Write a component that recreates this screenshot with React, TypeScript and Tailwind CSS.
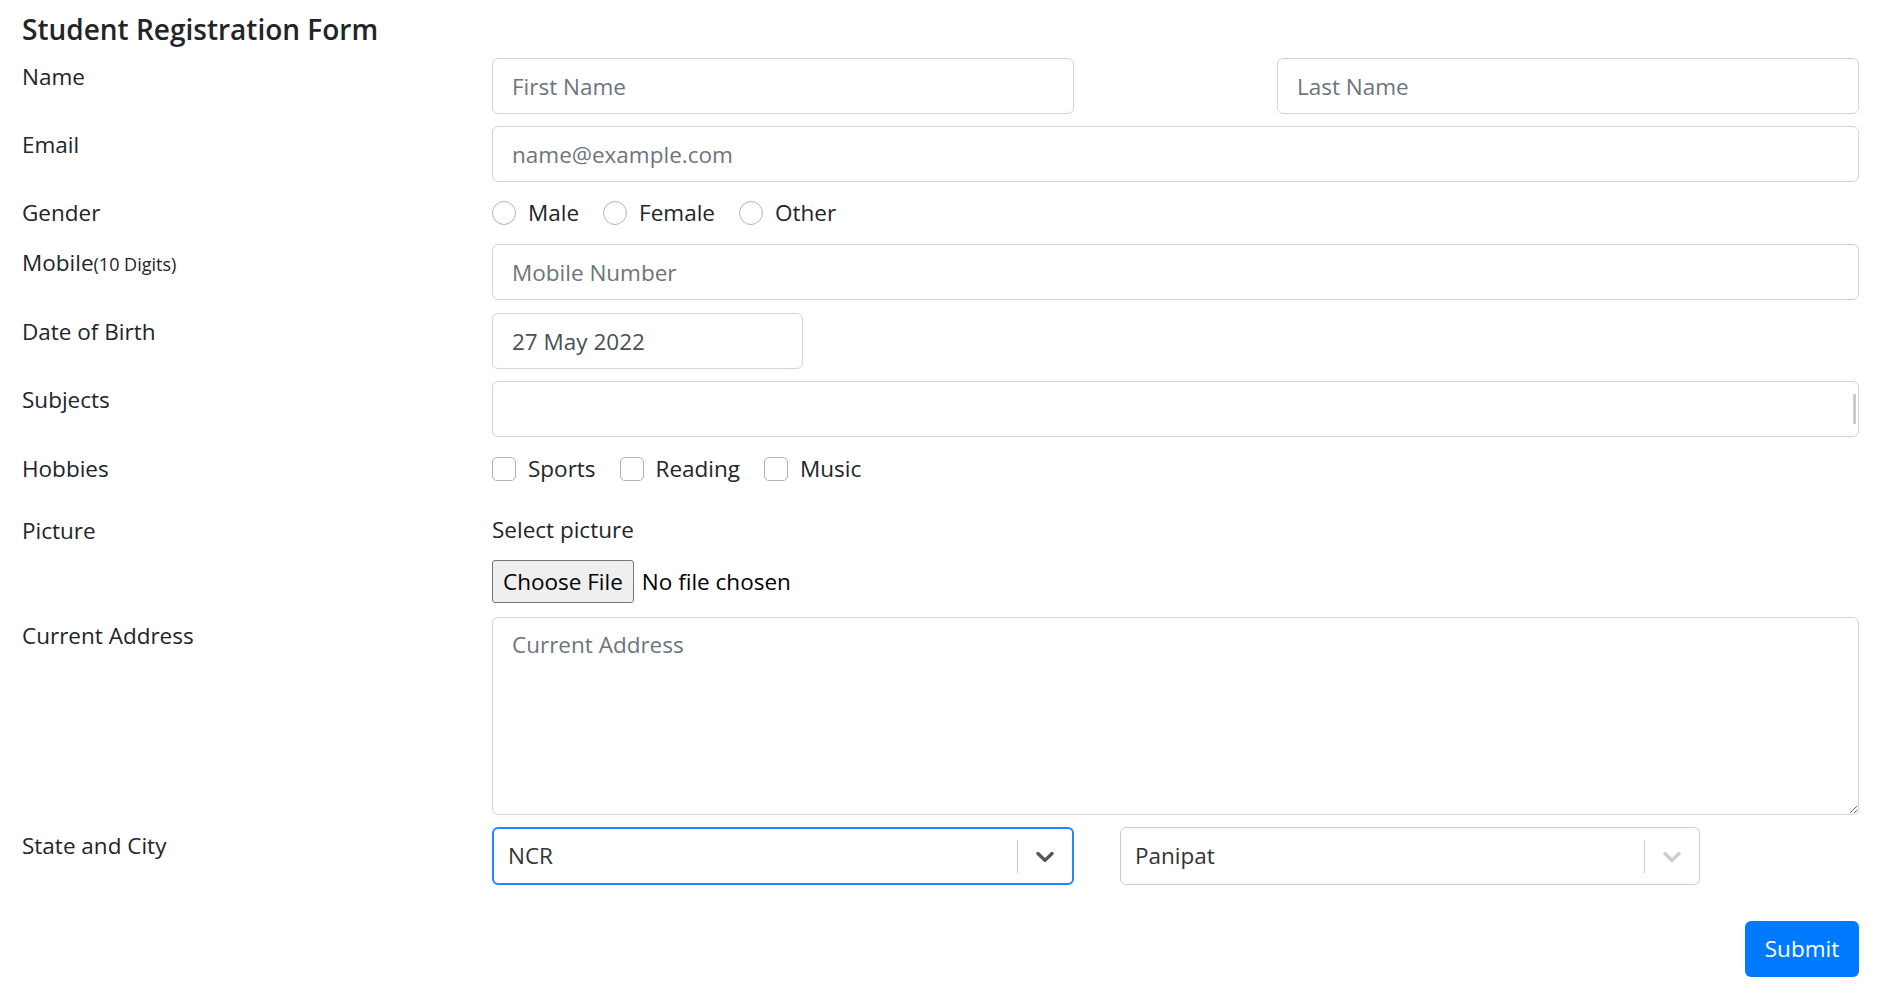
import { ReactNode } from "react";

function Row({ label, children, className = "" }: { label: ReactNode; children: ReactNode; className?: string }) {
  return (
    <div className={`flex ${className}`}>
      <div className="w-[470px] shrink-0 pt-px leading-[36px]">{label}</div>
      <div className="flex-1 min-w-0">{children}</div>
    </div>
  );
}

const inputCls =
  "block h-[56px] w-full rounded-[6px] border border-[#ced4da] bg-white px-[19px] text-[22.5px] text-[#495057] outline-none placeholder:text-[#6c757d]";

function Radio({ label }: { label: string }) {
  return (
    <span className="mr-[24px] inline-flex items-center">
      <span className="mr-[12px] h-[24px] w-[24px] rounded-full border border-[#adb5bd] bg-white" />
      {label}
    </span>
  );
}

function Check({ label }: { label: string }) {
  return (
    <span className="mr-[24px] inline-flex items-center">
      <span className="mr-[12px] h-[24px] w-[24px] rounded-[5px] border border-[#adb5bd] bg-white" />
      {label}
    </span>
  );
}

function Chevron({ color }: { color: string }) {
  return (
    <svg viewBox="0 0 20 20" className="h-[30px] w-[30px]" fill={color}>
      <path d="M4.516 7.548c0.436-0.446 1.043-0.481 1.576 0l3.908 3.747 3.908-3.747c0.533-0.481 1.141-0.446 1.574 0 0.436 0.445 0.408 1.197 0 1.615-0.406 0.418-4.695 4.502-4.695 4.502-0.217 0.223-0.502 0.335-0.787 0.335s-0.57-0.112-0.789-0.335c0 0-4.287-4.084-4.695-4.502s-0.436-1.17 0-1.615z" />
    </svg>
  );
}

function SelectBox({ value, focused, width }: { value: string; focused?: boolean; width: string }) {
  return (
    <div
      className={`flex h-[58px] items-center rounded-[6px] bg-white ${width} ${
        focused ? "border-2 border-[#2684ff]" : "border border-[#cccccc]"
      }`}
    >
      <div className="flex-1 pl-[14px] text-[#333333]">{value}</div>
      <span className="h-[33px] w-px bg-[#cccccc]" />
      <div className="px-[12px]">
        <Chevron color={focused ? "#555555" : "#cccccc"} />
      </div>
    </div>
  );
}

export default function App() {
  return (
    <div className="min-h-screen bg-white px-[22px] pt-[11px] font-['Open_Sans',sans-serif] text-[22.5px] text-[#212529]">
      <h5 className="mb-[11px] text-[28px] font-semibold leading-[36px]">Student Registration Form</h5>
      <form className="flex flex-col" onSubmit={(e) => e.preventDefault()}>
        <Row label="Name" className="mb-[12px]">
          <div className="flex justify-between">
            <input className={`${inputCls} !w-[582px]`} placeholder="First Name" />
            <input className={`${inputCls} !w-[582px]`} placeholder="Last Name" />
          </div>
        </Row>
        <Row label="Email" className="mb-[12px]">
          <input className={inputCls} placeholder="name@example.com" />
        </Row>
        <Row label="Gender" className="mb-[12px]">
          <div className="flex h-[38px] items-center">
            <Radio label="Male" />
            <Radio label="Female" />
            <Radio label="Other" />
          </div>
        </Row>
        <Row
          label={
            <>
              Mobile<small className="text-[18px]">(10 Digits)</small>
            </>
          }
          className="mb-[13px]"
        >
          <input className={inputCls} placeholder="Mobile Number" />
        </Row>
        <Row label="Date of Birth" className="mb-[12px]">
          <input className={`${inputCls} !w-[311px]`} defaultValue="27 May 2022" />
        </Row>
        <Row label="Subjects" className="mb-[13px]">
          <div className="relative">
            <input className={inputCls} />
            <span className="absolute right-[3px] top-[13px] h-[30px] w-[3px] bg-[#cccccc]" />
          </div>
        </Row>
        <Row label="Hobbies" className="mb-[25px]">
          <div className="flex h-[37px] items-center">
            <Check label="Sports" />
            <Check label="Reading" />
            <Check label="Music" />
          </div>
        </Row>
        <Row label="Picture" className="mb-[14px]">
          <div className="leading-[36px]">Select picture</div>
          <div className="mt-[12px] flex items-center">
            <button
              type="button"
              className="h-[43px] rounded-[3px] border border-[#767676] bg-[#efefef] px-[10px] text-[22.5px] text-black"
            >
              Choose File
            </button>
            <span className="ml-[8px] text-black">No file chosen</span>
          </div>
        </Row>
        <Row label="Current Address" className="mb-[12px]">
          <textarea
            className="block h-[198px] w-full rounded-[6px] border border-[#ced4da] px-[19px] pt-[9px] text-[22.5px] leading-[36px] outline-none placeholder:text-[#6c757d]"
            placeholder="Current Address"
          />
        </Row>
        <Row label="State and City">
          <div className="flex gap-[46px]">
            <SelectBox value="NCR" focused width="w-[582px]" />
            <SelectBox value="Panipat" width="w-[580px]" />
          </div>
        </Row>
        <div className="mt-[36px] flex justify-end">
          <button type="submit" className="h-[56px] w-[114px] rounded-[6px] bg-[#007bff] text-[22.5px] text-white">
            Submit
          </button>
        </div>
      </form>
    </div>
  );
}
